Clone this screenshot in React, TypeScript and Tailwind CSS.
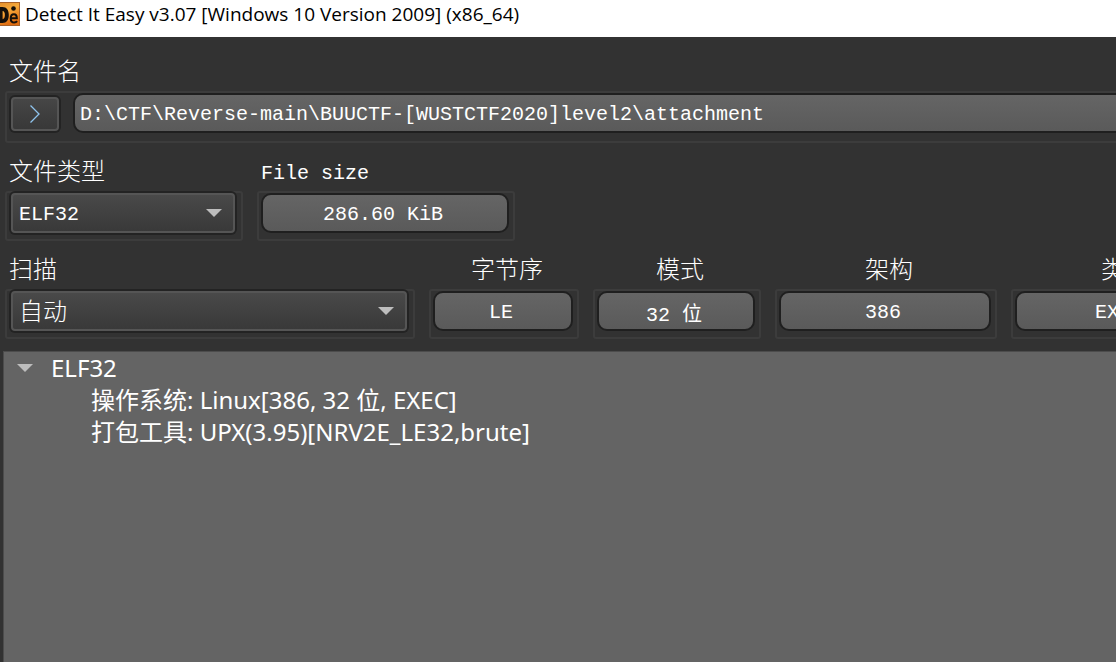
import { useState, type ReactNode } from "react";

const MONO = "font-['Liberation_Mono','Noto_Sans_CJK_SC',monospace]";
const TITLE = "font-['Open_Sans','Noto_Sans_CJK_SC',sans-serif]";
const SANS = "font-['Noto_Sans','Noto_Sans_CJK_SC',sans-serif]";

function AppIcon() {
  return (
    <svg viewBox="0 0 20 24" className="h-6 w-5 shrink-0" aria-hidden="true">
      <defs>
        <linearGradient id="amber" x1="0" y1="0" x2="0.4" y2="1">
          <stop offset="0" stopColor="#e08a28" />
          <stop offset="0.45" stopColor="#f7ab3c" />
          <stop offset="1" stopColor="#e06d10" />
        </linearGradient>
      </defs>
      <rect x="-4" y="0.5" width="23.500" height="23" fill="url(#amber)" stroke="#a8622a" />
      <path fillRule="evenodd" d="M0 5h2.500c4.200 0 6.300 3.200 6.300 8s-2.100 8-6.300 8H0zM2.600 9v8.200c1.500-.2 2.300-1.700 2.300-4.200s-.8-3.800-2.300-4z" fill="#15100a" />
      <circle cx="13.500" cy="6.500" r="2.300" fill="#15100a" />
      <path d="M10.500 16.200h6.300c0-2.600-1.100-4-2.900-4-2 0-3.200 1.600-3.200 4.200s1.300 4.100 3.500 4.100c1.300 0 2.300-.5 2.900-1.300" fill="none" stroke="#15100a" strokeWidth="2" />
    </svg>
  );
}

function DownArrow() {
  return (
    <svg viewBox="0 0 16 8" className="h-2 w-4" aria-hidden="true">
      <path d="M0 0h16L8 8z" fill="#bdbdbd" />
    </svg>
  );
}

function Field({ label, htmlFor, width, center, latin, children }: {
  label: string;
  htmlFor: string;
  width: string;
  center?: boolean;
  latin?: boolean;
  children: ReactNode;
}) {
  return (
    <div className={`flex flex-col gap-1 ${width}`}>
      <label
        htmlFor={htmlFor}
        className={`block h-8 leading-[38px] whitespace-nowrap ${latin ? "text-[20px]" : "text-[24px] font-light"} ${center ? "pl-1.5 text-center" : "pl-1"}`}
      >
        {label}
      </label>
      {children}
    </div>
  );
}

const groupBox = "rounded-[3px] pr-1.5 pl-1 shadow-[inset_0_0_0_2px_#3c3c3c]";
const inputBox =
  "block h-10 w-full min-w-0 rounded-[10px] border-2 border-[#1f1f1f] bg-linear-to-b from-[#656565] to-[#5a5a5a] pt-[3px] text-[20px] text-white outline-none";

function ValueField({ id, label, value, width, latin, centerLabel = true }: {
  id: string;
  label: string;
  value: string;
  width: string;
  latin?: boolean;
  centerLabel?: boolean;
}) {
  return (
    <Field label={label} htmlFor={id} width={width} center={centerLabel} latin={latin}>
      <div className={`h-[50px] pt-0.5 ${groupBox}`}>
        <input id={id} readOnly value={value} className={`${inputBox} pr-1 text-center`} />
      </div>
    </Field>
  );
}

function SelectField({ id, label, options, width, size }: {
  id: string;
  label: string;
  options: string[];
  width: string;
  size: string;
}) {
  return (
    <Field label={label} htmlFor={id} width={width}>
      <div className={`h-[50px] ${groupBox}`}>
        <div className="relative rounded-md bg-[#232323] p-0.5">
          <select
            id={id}
            className={`block h-10 w-full appearance-none rounded border-2 border-[#555555] bg-linear-to-b from-[#494949] to-[#393939] pl-1.5 text-white outline-none ${size}`}
          >
            {options.map((option) => (
              <option key={option}>{option}</option>
            ))}
          </select>
          <span className="pointer-events-none absolute inset-y-0 right-[15px] flex items-center">
            <DownArrow />
          </span>
        </div>
      </div>
    </Field>
  );
}

export default function App() {
  const [open, setOpen] = useState(true);

  return (
    <div lang="zh-CN" className={`flex min-h-screen flex-col overflow-hidden bg-[#323232] text-white ${MONO}`}>
      <header className={`flex h-[37px] items-start gap-[5px] bg-white pt-0.5 text-black ${TITLE}`}>
        <AppIcon />
        <h1 className="text-[19px] leading-6 whitespace-nowrap">
          Detect It Easy v3.07 [Windows 10 Version 2009] (x86_64)
        </h1>
      </header>

      <main className="flex grow flex-col gap-3 overflow-hidden pt-[18px]">
        <div className="-mr-4 pl-[5px]">
          <Field label="文件名" htmlFor="file-name" width="w-full">
            <div className={`flex h-[52px] items-start gap-3 pt-0.5 ${groupBox}`}>
              <button
                type="button"
                aria-label="打开文件"
                className="mt-0.5 shrink-0 rounded-md bg-[#232323] p-0.5"
              >
                <span className="flex h-[34px] w-12 items-center justify-center rounded border-2 border-[#555555] bg-linear-to-b from-[#464646] to-[#383838]">
                  <svg viewBox="0 0 10 18" className="h-[18px] w-2.5" fill="none" stroke="#8fc4ee" strokeWidth="1.300" aria-hidden="true">
                    <path d="M0.500 0.500L9 9L0.500 17.500" />
                  </svg>
                </span>
              </button>
              <input
                id="file-name"
                defaultValue="D:\CTF\Reverse-main\BUUCTF-[WUSTCTF2020]level2\attachment"
                className={`${inputBox} pl-[5px]`}
              />
            </div>
          </Field>
        </div>

        <div className="flex gap-3.5 pl-[5px]">
          <SelectField id="file-type" label="文件类型" options={["ELF32"]} width="w-[238px]" size="pt-1 text-[20px]" />
          <ValueField id="file-size" label="File size" value="286.60 KiB" width="w-[258px]" latin centerLabel={false} />
        </div>

        <div className="flex gap-3.5 pl-[5px]">
          <SelectField id="scan" label="扫描" options={["自动"]} width="w-[410px] shrink-0" size="pt-[3px] text-[24px] font-light" />
          <ValueField id="endian" label="字节序" value="LE" width="w-[150px] shrink-0" />
          <ValueField id="mode" label="模式" value="32 位" width="w-[168px] shrink-0" />
          <ValueField id="arch" label="架构" value="386" width="w-[222px] shrink-0" />
          <ValueField id="kind" label="类型" value="EXEC" width="w-[222px] shrink-0" />
        </div>

        <section className={`ml-[3px] grow border-t border-l border-[#4c4c4c] bg-[#646464] text-[24px] leading-8 ${SANS}`}>
          <ul>
            <li>
              <div className="flex items-center">
                <button
                  type="button"
                  aria-label="ELF32"
                  aria-expanded={open}
                  onClick={() => setOpen(!open)}
                  className="flex h-8 w-[47px] items-center pl-[13px]"
                >
                  <DownArrow />
                </button>
                <span>ELF32</span>
              </div>
              {open && (
                <ul className="pl-[87px]">
                  <li className="whitespace-nowrap">操作系统: Linux[386, 32 位, EXEC]</li>
                  <li className="whitespace-nowrap">打包工具: UPX(3.95)[NRV2E_LE32,brute]</li>
                </ul>
              )}
            </li>
          </ul>
        </section>
      </main>
    </div>
  );
}
